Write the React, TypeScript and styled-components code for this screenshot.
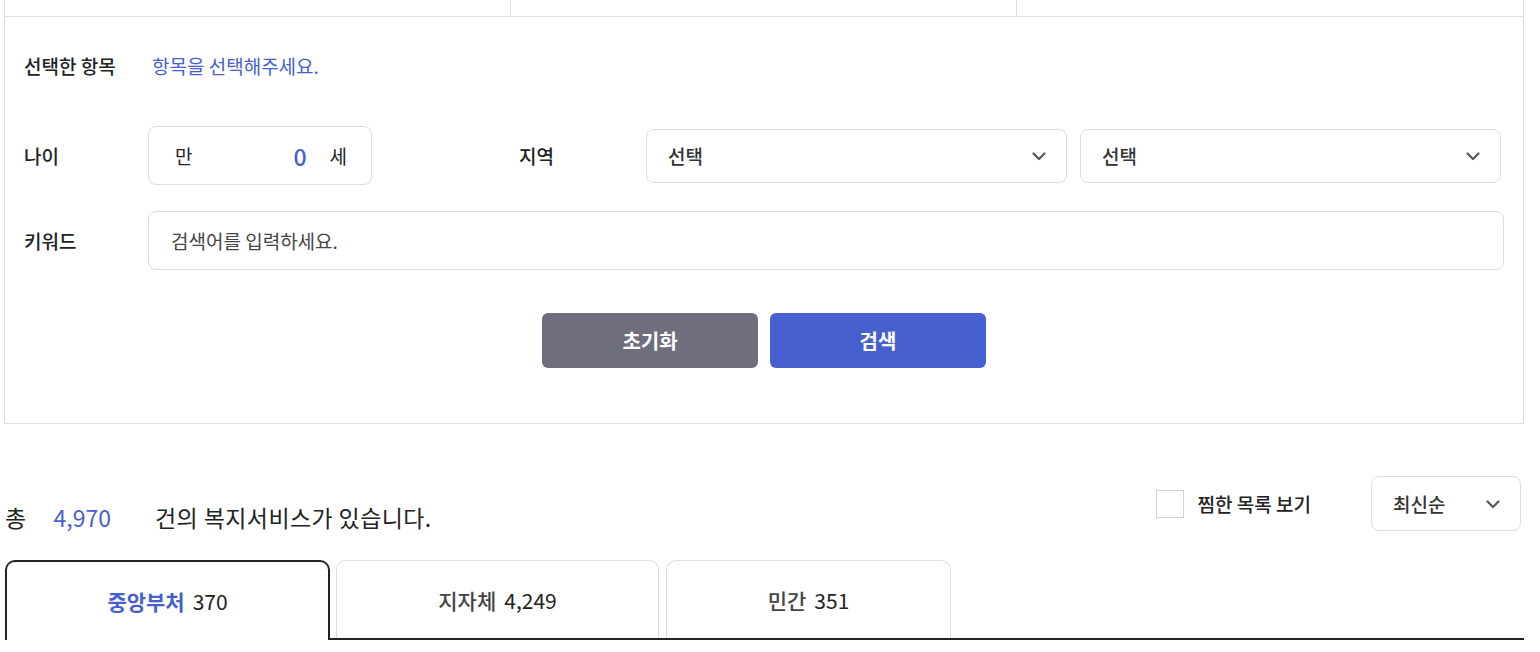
import React from 'react';
import styled, { createGlobalStyle } from 'styled-components';

const blue = '#4760cf';
const line = '#dddddd';
const ink = '#222222';

const GlobalStyle = createGlobalStyle`
  html, body {
    margin: 0;
    padding: 0;
    background: #ffffff;
  }
  body {
    font-family: 'Noto Sans CJK KR', 'Noto Sans', sans-serif;
    color: ${ink};
  }
`;

const Page = styled.div`
  width: 1520px;
  padding-left: 4px;
`;

const SearchPanel = styled.section`
  border: 1px solid ${line};
  border-top: none;
`;

const CategoryStrip = styled.div`
  display: grid;
  grid-template-columns: 505px 506px 1fr;
  height: 16px;
  border-bottom: 1px solid ${line};
`;

const CategoryCell = styled.div`
  & + & {
    border-left: 1px solid ${line};
  }
`;

const Form = styled.div`
  display: flex;
  flex-direction: column;
  padding: 37px 19px 55px 19px;
`;

const Row = styled.div<{ $gap?: number }>`
  display: flex;
  align-items: center;
  margin-top: ${(p) => p.$gap ?? 0}px;
`;

const Label = styled.div<{ $w: number; $ml?: number }>`
  width: ${(p) => p.$w}px;
  margin-left: ${(p) => p.$ml ?? 0}px;
  flex-shrink: 0;
  font-size: 19px;
  font-weight: 500;
  line-height: 24px;
  color: ${ink};
`;

const Hint = styled.div`
  font-size: 19px;
  line-height: 24px;
  color: ${blue};
`;

const AgeBox = styled.div`
  width: 224px;
  height: 59px;
  box-sizing: border-box;
  border: 1px solid ${line};
  border-radius: 8px;
  display: flex;
  align-items: center;
  padding: 0 24px 0 26px;
  font-size: 19px;
`;

const AgeValue = styled.span`
  margin-left: auto;
  margin-right: 23px;
  font-size: 23px;
  font-weight: 500;
  color: ${blue};
`;

const SelectBox = styled.div<{ $w?: number; $h?: number }>`
  ${(p) => (p.$w ? `width: ${p.$w}px;` : 'flex: 1;')}
  height: ${(p) => p.$h ?? 54}px;
  box-sizing: border-box;
  border: 1px solid ${line};
  border-radius: 8px;
  display: flex;
  align-items: center;
  justify-content: space-between;
  padding: 0 19px 0 21px;
  font-size: 19px;
  font-weight: 500;
  color: #333333;
`;

const Selects = styled.div`
  flex: 1;
  display: flex;
  gap: 13px;
  margin-right: 3px;
`;

const KeywordInput = styled.div`
  flex: 1;
  height: 59px;
  box-sizing: border-box;
  border: 1px solid ${line};
  border-radius: 8px;
  display: flex;
  align-items: center;
  padding-left: 22px;
  font-size: 19px;
  color: #444444;
`;

const Buttons = styled.div`
  display: flex;
  justify-content: center;
  gap: 12px;
  margin-top: 43px;
`;

const Button = styled.button<{ $primary?: boolean }>`
  width: 216px;
  height: 55px;
  border: none;
  border-radius: 6px;
  background: ${(p) => (p.$primary ? blue : '#6e6e7e')};
  color: #ffffff;
  font-family: inherit;
  font-size: 20px;
  font-weight: 700;
`;

const ResultBar = styled.div`
  display: flex;
  align-items: flex-end;
  justify-content: space-between;
  margin-top: 52px;
  padding: 0 3px 0 1px;
`;

const Total = styled.div`
  font-size: 23px;
  line-height: 28px;
  letter-spacing: 0.4px;
  color: ${ink};
`;

const Count = styled.span`
  color: ${blue};
  letter-spacing: 0;
  margin: 0 44px 0 27px;
`;

const Controls = styled.div`
  display: flex;
  align-items: center;
`;

const Check = styled.label`
  display: flex;
  align-items: center;
  gap: 14px;
  font-size: 19px;
  font-weight: 500;
  margin-right: 60px;
`;

const Box = styled.span`
  width: 26px;
  height: 26px;
  border: 1px solid #c9d0e4;
`;

const TabList = styled.div`
  display: flex;
  align-items: flex-end;
  margin-top: 29px;
  margin-left: 1px;
  border-bottom: 2px solid ${ink};
`;

const Tab = styled.div<{ $w: number; $active?: boolean; $ml?: number }>`
  width: ${(p) => p.$w}px;
  margin-left: ${(p) => p.$ml ?? 0}px;
  box-sizing: border-box;
  display: flex;
  align-items: center;
  justify-content: center;
  gap: 8px;
  border: ${(p) => (p.$active ? `2px solid ${ink}` : `1px solid ${line}`)};
  border-bottom: none;
  border-radius: 10px 10px 0 0;
  background: #ffffff;
  margin-bottom: ${(p) => (p.$active ? -2 : 0)}px;
  height: ${(p) => (p.$active ? 80 : 78)}px;
  font-size: 21px;
`;

const TabName = styled.span<{ $active?: boolean }>`
  color: ${(p) => (p.$active ? blue : '#444444')};
  font-weight: ${(p) => (p.$active ? 700 : 500)};
`;

const TabCount = styled.span`
  color: ${ink};
`;

const Chevron = () => (
  <svg width="16" height="16" viewBox="0 0 16 16" fill="none">
    <path d="M2.5 5.5 L8 11 L13.5 5.5" stroke="#555555" strokeWidth="2.2" strokeLinecap="round" strokeLinejoin="round" />
  </svg>
);

const tabs = [
  { name: '중앙부처', count: '370', width: 325, ml: 0 },
  { name: '지자체', count: '4,249', width: 323, ml: 6 },
  { name: '민간', count: '351', width: 285, ml: 7 }
];

export default function App() {
  return (
    <Page>
      <GlobalStyle />
      <SearchPanel>
        <CategoryStrip>
          <CategoryCell />
          <CategoryCell />
          <CategoryCell />
        </CategoryStrip>
        <Form>
          <Row>
            <Label $w={128}>선택한 항목</Label>
            <Hint>항목을 선택해주세요.</Hint>
          </Row>
          <Row $gap={48}>
            <Label $w={124}>나이</Label>
            <AgeBox>
              <span>만</span>
              <AgeValue>0</AgeValue>
              <span>세</span>
            </AgeBox>
            <Label $w={127} $ml={147}>지역</Label>
            <Selects>
              <SelectBox>
                선택
                <Chevron />
              </SelectBox>
              <SelectBox>
                선택
                <Chevron />
              </SelectBox>
            </Selects>
          </Row>
          <Row $gap={26}>
            <Label $w={124}>키워드</Label>
            <KeywordInput>검색어를 입력하세요.</KeywordInput>
          </Row>
          <Buttons>
            <Button>초기화</Button>
            <Button $primary>검색</Button>
          </Buttons>
        </Form>
      </SearchPanel>

      <ResultBar>
        <Total>
          총<Count>4,970</Count>건의 복지서비스가 있습니다.
        </Total>
        <Controls>
          <Check>
            <Box />
            찜한 목록 보기
          </Check>
          <SelectBox $w={150} $h={55}>
            최신순
            <Chevron />
          </SelectBox>
        </Controls>
      </ResultBar>

      <TabList>
        {tabs.map((t, i) => (
          <Tab key={t.name} $w={t.width} $ml={t.ml} $active={i === 0}>
            <TabName $active={i === 0}>{t.name}</TabName>
            <TabCount>{t.count}</TabCount>
          </Tab>
        ))}
      </TabList>
    </Page>
  );
}
